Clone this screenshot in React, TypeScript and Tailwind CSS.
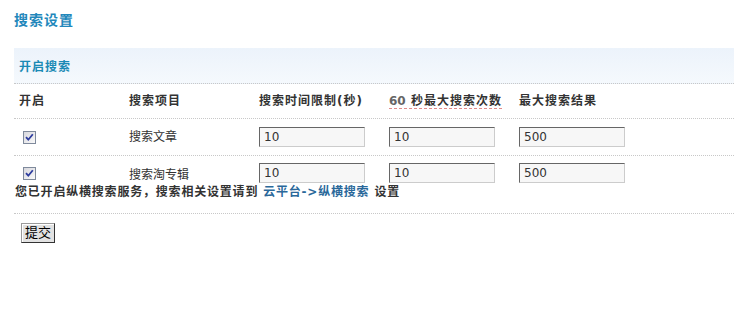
import React from "react";

// search items shown in the settings table
const searchItems = [
  { id: "article", name: "搜索文章", timeLimit: "10", maxTimes: "10", maxResults: "500" },
  { id: "album", name: "搜索淘专辑", timeLimit: "10", maxTimes: "10", maxResults: "500" },
];

const font = { fontFamily: '"DejaVu Sans", "Noto Sans CJK SC", sans-serif' };

function FakeCheckbox() {
  return (
    <svg width="13" height="13" viewBox="0 0 13 13" className="block">
      <defs>
        <linearGradient id="cbg" x1="0" y1="0" x2="1" y2="1">
          <stop offset="0" stopColor="#d6d6dc" />
          <stop offset="1" stopColor="#fbfbfb" />
        </linearGradient>
      </defs>
      <rect x="0.5" y="0.5" width="12" height="12" fill="url(#cbg)" stroke="#7f8a9c" />
      <path d="M3 6.2 L5.3 8.7 L9.8 3.2" fill="none" stroke="#2d3c9e" strokeWidth="1.8" />
    </svg>
  );
}

function TextBox({ value }: { value: string }) {
  return (
    <input
      type="text"
      readOnly
      defaultValue={value}
      className="w-[106px] h-[20px] px-[4px] bg-[#f7f7f7] border border-t-[#666] border-l-[#666] border-r-[#ccc] border-b-[#ccc] text-[12px] text-[#333] outline-none"
      style={{ fontFamily: '"DejaVu Sans", sans-serif' }}
    />
  );
}

export default function App() {
  return (
    <div className="w-[734px] h-[316px] bg-white text-[12px] text-[#333]" style={font}>
      <div className="h-[48px] pl-[14px] pt-[10px]">
        <h2 className="text-[14px] leading-[20px] font-bold tracking-[1px] text-[#2287bb]">搜索设置</h2>
      </div>

      <div className="ml-[14px]">
        {/* section caption */}
        <div className="h-[36px] pl-[5px] pt-[3px] flex items-center bg-gradient-to-b from-[#ecf3fb] to-[#f5f9fd] border-b border-dotted border-[#c8c8c8]">
          <span className="font-bold tracking-[1px] text-[#1b8ab5]">开启搜索</span>
        </div>

        {/* column headers */}
        <div className="h-[35px] flex items-center border-b border-dotted border-[#c8c8c8] font-bold tracking-[1px]">
          <div className="w-[110px] pl-[5px]">开启</div>
          <div className="w-[130px] pl-[5px]">搜索项目</div>
          <div className="w-[130px] pl-[5px]">搜索时间限制(秒)</div>
          <div className="w-[130px] pl-[5px]">
            <span className="border-b border-dashed border-[#e08a8a] leading-[14px] inline-block">
              <span className="text-[#666] tracking-normal">60</span> 秒最大搜索次数
            </span>
          </div>
          <div className="pl-[5px]">最大搜索结果</div>
        </div>

        {searchItems.map((item, i) => (
          <div
            key={item.id}
            className={
              i === 0
                ? "h-[37px] flex items-center border-b border-dotted border-[#c8c8c8]"
                : "h-[29px] pt-[7px] flex items-start"
            }
          >
            <div className={i === 0 ? "w-[110px] pl-[9px]" : "w-[110px] pl-[9px] pt-[4px]"}>
              <FakeCheckbox />
            </div>
            <div className={i === 0 ? "w-[130px] pl-[5px]" : "w-[130px] pl-[5px] pt-[3px]"}>{item.name}</div>
            <div className="w-[130px] pl-[5px]">
              <TextBox value={item.timeLimit} />
            </div>
            <div className="w-[130px] pl-[5px]">
              <TextBox value={item.maxTimes} />
            </div>
            <div className="pl-[5px]">
              <TextBox value={item.maxResults} />
            </div>
          </div>
        ))}

        {/* notice */}
        <div className="h-[29px] pl-[1px] border-b border-dotted border-[#c8c8c8] font-bold tracking-[0.8px] leading-[14px]">
          您已开启纵横搜索服务，搜索相关设置请到{" "}
          <a href="#" className="text-[#2a689a]">云平台-&gt;纵横搜索</a> 设置
        </div>

        <div className="pt-[9px] pl-[7px]">
          <button className="w-[34px] h-[20px] bg-[#e2e2e2] border border-t-[#9a9a9a] border-l-[#9a9a9a] border-r-[#333] border-b-[#333] shadow-[inset_1px_1px_0_#fff] text-[13px] leading-[16px] text-black">
            提交
          </button>
        </div>
      </div>
    </div>
  );
}
